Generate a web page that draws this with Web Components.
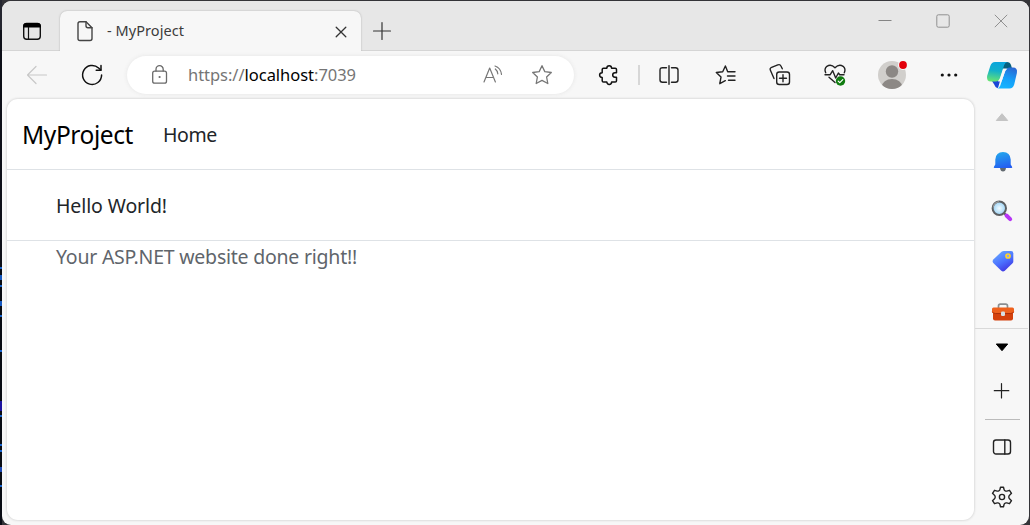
<!DOCTYPE html>
<html lang="en"><head><meta charset="utf-8"><title>- MyProject</title>
<style>
html,body{margin:0;height:100%;overflow:hidden}
body{background:#15171f;font-family:"Noto Sans","Open Sans",sans-serif}
</style></head><body>
<browser-window></browser-window>
<script>
const define=(name,html,extra)=>{
  const t=document.createElement('template');t.innerHTML=html;
  customElements.define(name,class extends HTMLElement{
    connectedCallback(){
      if(this.shadowRoot)return;
      this.attachShadow({mode:'open'}).appendChild(t.content.cloneNode(true));
      if(extra)extra(this);
    }
  });
};

/* name: [width, height, markup] */
const S='fill="none" stroke-linecap="round" stroke-linejoin="round"';
const icons={
workspace:[20,20,`<rect x="1.7" y="2.5" width="16.6" height="15.8" rx="3" fill="none" stroke="#111" stroke-width="1.4"/><path d="M1.2 6.500V4.900Q1.2 2 4.6 2h10.8q3.4 0 3.4 2.900v1.600z" fill="#000"/><path d="M6.5 6v12" stroke="#111" stroke-width="1.2"/>`],
page:[18,22,`<g ${S} stroke="#444" stroke-width="1.4"><path d="M4 1.7h6l6 6v10.8q0 2-2 2H4q-2 0-2-2V3.7q0-2 2-2z"/><path d="M10 1.8v4q0 2 2 2h4"/></g>`],
close:[12,12,`<path d="M1.200 1.200l9.600 9.600M10.800 1.200l-9.600 9.600" ${S} stroke="#333" stroke-width="1.3"/>`],
plus:[18,18,`<path d="M9 .5v17M.5 9h17" ${S} stroke="#333" stroke-width="1.2"/>`],
min:[14,14,`<path d="M.5 6.500h13" stroke="#858585"/>`],
max:[14,14,`<rect x=".8" y=".8" width="12.400" height="12.400" rx="1.5" fill="none" stroke="#909090"/>`],
winclose:[14,14,`<path d="M.8.8l12.4 12.4M13.2.8L.8 13.2" fill="none" stroke="#909090"/>`],
back:[22,20,`<path d="M20.5 10H1.5M10 1.5L1.5 10l8.5 8.5" ${S} stroke="#c8c8c8" stroke-width="1.2"/>`],
refresh:[22,22,`<g ${S} stroke="#111" stroke-width="1.5"><path d="M20.6 11a9.5 9.5 0 1 1-3-7l2.2 2"/><path d="M20 1.6V6.300h-4.8"/></g>`],
lock:[18,20,`<g ${S} stroke="#6a6a6a" stroke-width="1.3"><rect x="1.700" y="6.200" width="13.800" height="12" rx="2"/><path d="M5 6V4.300a3.600 3.600 0 0 1 7.200 0V6"/></g><circle cx="8.600" cy="12" r="1.100" fill="#6a6a6a"/>`],
read:[20,20,`<g ${S} stroke="#777" stroke-width="1.200"><path d="M1 17L6.700 3 12.400 17M3 12.500h7.500"/><path d="M12.300 4q2.300 1.800 2.500 4.800M12 1q5.700 1.800 6.500 8.400"/></g>`],
star:[22,22,`<path d="M11 1.700l2.800 5.900 6.500.9-4.700 4.500 1.200 6.500-5.800-3.100-5.800 3.100 1.200-6.500L1.700 8.500l6.500-.9z" ${S} stroke="#777" stroke-width="1.300"/>`],
puzzle:[20,20,`<path d="M4.500 3.200h3.300Q7.900.700 10.200.700t2.400 2.500h3.600q1.300 0 1.300 1.300v3.300h-1.600q-2.200.2-2.200 2.200t2.200 2.200h1.600v3.500q0 1.300-1.300 1.300h-3.600q0 2.400-2.300 2.400T7.800 17H4.500q-1.300 0-1.300-1.300v-3.300Q.6 12.300.6 10t2.600-2.300V4.500q0-1.300 1.300-1.300z" ${S} stroke="#111" stroke-width="1.500"/>`],
sep:[2,20,`<path d="M1 0v20" stroke="#ccc" stroke-width="1.500"/>`],
split:[20,20,`<g fill="none" stroke="#222" stroke-width="1.400" stroke-linecap="round"><path d="M7.500 2.700H3.500q-2.500 0-2.500 2.500v9.600q0 2.500 2.500 2.500h4M12.500 2.700h4q2.500 0 2.500 2.500v9.600q0 2.500-2.500 2.500h-4M10 .7v18.600"/></g>`],
fav:[22,20,`<path d="M12.700 6.800L10.400 1 7.700 6.700l-6.400.8 4.700 4.600-1.200 6.600 5.500-3M12.700 6.800H20M12.500 11h7.500M13.500 15.300H20" ${S} stroke="#222" stroke-width="1.400"/>`],
collections:[22,22,`<g ${S} stroke="#222" stroke-width="1.400"><rect x="7.700" y="8" width="12.800" height="12.500" rx="2.500"/><path d="M14 10.800v7M10.500 14.300h7M5 14.500L1.400 6.300q-.9-2 1.200-2.900L8.800.9q2.200-.9 3 .9l1.500 3"/></g>`],
heart:[22,22,`<g ${S} stroke="#222" stroke-width="1.400"><path d="M1.700 8.800Q-.1 4.800 2.900 2.300 7-.3 11 3.700q4-4 8.100-1.400 3 2.500 1.200 6.500M1 10.700h5.200l2.500-4 3 7.300 2.700-5 1.300 1.700H20M5 13.200l6 5.300"/></g><circle cx="16.500" cy="17" r="4.700" fill="#107c10"/><path d="M14.200 17.100l1.600 1.600 3-3.100" ${S} stroke="#fff" stroke-width="1.200"/>`],
avatar:[30,30,`<clipPath id="c"><circle cx="15" cy="15" r="14"/></clipPath><circle cx="15" cy="15" r="14" fill="#d1cfcc"/><g clip-path="url(#c)" fill="#8c8885"><circle cx="15" cy="11.500" r="6.200"/><ellipse cx="15" cy="27" rx="10.200" ry="8"/></g><circle cx="26" cy="5" r="5" fill="#f7f7f7"/><circle cx="26" cy="5" r="3.900" fill="#e3000b"/>`],
dots:[18,6,`<g fill="#111"><circle cx="2.300" cy="3" r="1.600"/><circle cx="9" cy="3" r="1.600"/><circle cx="15.700" cy="3" r="1.600"/></g>`],
copilot:[32,30,`<defs><linearGradient id="a" x1=".5" y1="0" x2=".35" y2="1"><stop stop-color="#0aa5dc"/><stop offset=".45" stop-color="#12b0cb"/><stop offset="1" stop-color="#67e472"/></linearGradient><linearGradient id="b" x1=".8" y1="0" x2=".4" y2="1"><stop stop-color="#2b66d2"/><stop offset=".55" stop-color="#159ff8"/><stop offset="1" stop-color="#16b4ff"/></linearGradient></defs><path d="M17 2h4q3 0 4 3l1 3.500h-9z" fill="#07607f"/><path d="M6 21h8l-2 7q-2.500 0-3.500-3z" fill="#1b47d8"/><path d="M9 2h12.500q-2.500.4-3.300 3L14 18q-1.200 3.500-4.300 3.500H5Q.2 21.500 1.100 16L4.300 6Q5.600 2 9 2z" fill="url(#a)"/><path d="M23.500 28.500H11q2.500-.5 3.300-3L19 11.500Q20.500 7.500 23.500 7.500H27q4.800 0 3.900 5.500l-2.700 11.500q-1.200 4-4.700 4z" fill="url(#b)"/><path d="M17.300 9h4q-1.600.7-2.300 2.700L15.500 21.500h-3.800q1.700-.7 2.400-2.800z" fill="#f7f7f7"/>`],
up:[14,10,`<path d="M7 1.700L12.700 8.500H1.300z" fill="#c4c4c4" stroke="#c4c4c4" stroke-linejoin="round"/>`],
bell:[20,22,`<defs><linearGradient id="d" x1=".3" y1="0" x2=".6" y2="1"><stop stop-color="#24a7ed"/><stop offset="1" stop-color="#245df0"/></linearGradient></defs><path d="M7 17h6q-.5 3.500-3 3.500T7 17z" fill="#626970"/><path d="M10 1q7.200 0 7.700 7.500v5l1.500 2.500q.3 1-.8 1H1.600q-1.100 0-.8-1l1.500-2.500v-5Q2.800 1 10 1z" fill="url(#d)"/>`],
search:[22,22,`<defs><radialGradient id="e"><stop stop-color="#f2fbff"/><stop offset="1" stop-color="#9ad2f5"/></radialGradient></defs><path d="M12 12l3 3" stroke="#555" stroke-width="2"/><path d="M15.500 15.500l3.700 3.600" stroke="#b735f5" stroke-width="4" stroke-linecap="round"/><circle cx="8.300" cy="8.300" r="6.700" fill="url(#e)" stroke="#5d6063" stroke-width="2"/><path d="M2.200 7.500Q3 2.500 8 1.600" fill="none" stroke="#999" stroke-width="1.200"/>`],
tag:[22,22,`<defs><linearGradient id="f" x1=".2" y1=".1" x2=".7" y2="1"><stop stop-color="#65a2ff"/><stop offset=".5" stop-color="#4b72ff"/><stop offset="1" stop-color="#3f32df"/></linearGradient></defs><path d="M12 1h7q2.300 0 2.300 2.300v8.200q0 1-.8 1.800l-7.700 7.400q-1.800 1.500-3.500 0L1.300 13q-1.500-1.700 0-3.500L9.500 1.800Q10.500 1 12 1z" fill="url(#f)"/><circle cx="16" cy="6" r="2" fill="#879cff" stroke="#ffd42b" stroke-width="1.700"/>`],
toolbox:[24,20,`<path d="M7.500 6V4q0-1.800 1.800-1.800h5.400q1.800 0 1.800 1.800v2" fill="none" stroke="#8a8e91" stroke-width="1.700"/><path d="M2 9h20v7.500q0 2-2 2H4q-2 0-2-2z" fill="#d4410c"/><path d="M2.500 5.500h19Q23 5.500 23 7v2.500q0 2-3 2H4q-3 0-3-2V7q0-1.500 1.500-1.500z" fill="#ee611d"/><path d="M1.400 9.800q.5 1.700 3 1.700h15.200q2.500 0 3-1.700" fill="none" stroke="#ad300a"/><rect x="10" y="9.500" width="4" height="4.500" rx="1.200" fill="#d7dfe2"/>`],
down:[14,10,`<path d="M7 8.700L12.700 2H1.300z" fill="#000" stroke="#000" stroke-linejoin="round"/>`],
add:[16,16,`<path d="M7.500 .5v14.500M.3 7.700h14.500" ${S} stroke="#222" stroke-width="1.200"/>`],
panel:[20,18,`<g ${S} stroke="#222" stroke-width="1.400"><rect x="1.500" y="2" width="17" height="14" rx="2.500"/><path d="M12.800 2v14"/></g>`],
gear:[22,22,`<g ${S} stroke="#222" stroke-width="1.400"><circle cx="11" cy="11" r="2.600"/><path d="M9.500 1.300h3l.6 2.300q.2.800 1.100 1.200.9.500 1.600.3l2.700-.8 2 3-2 1.900q-.7.600-.7 1.800t.7 1.800l2 1.900-2 3-2.700-.8q-.7-.2-1.600.3-.9.400-1.100 1.200l-.6 2.300h-3l-.6-2.300q-.2-.8-1.100-1.200-.9-.5-1.600-.3l-2.700.8-2-3 2-1.900q.7-.6.700-1.800t-.7-1.800l-2-1.900 2-3 2.700.8q.7.2 1.600-.3.9-.4 1.100-1.200z"/></g>`]
};
define('ui-icon','<style>:host{display:block;flex:none;line-height:0}svg{display:block;overflow:visible}</style><div></div>',el=>{
  const [w,h,m]=icons[el.getAttribute('name')];
  el.shadowRoot.querySelector('div').innerHTML=`<svg width="${w}" height="${h}" viewBox="0 0 ${w} ${h}">${m}</svg>`;
});

/* Single line label tracked to an even advance width */
define('ui-label','<style>:host{display:block;flex:none;white-space:pre}span{display:inline-block}</style><span><slot></slot></span>',el=>{
  const want=+el.getAttribute('width'),s=el.shadowRoot.querySelector('span');
  s.style.letterSpacing=(want-s.getBoundingClientRect().width)/el.textContent.length+'px';
});

define('browser-tab',`<style>
:host{display:flex;align-items:center;box-sizing:border-box;width:301px;height:40px;background:#f7f7f7;border-radius:7px 7px 0 0;box-shadow:0 0 2px #aaa;padding:0 14px 0 16px;color:#3c3c3c;font-size:14.5px;clip-path:inset(-3px -3px 0 -3px)}
ui-label{margin:-2px 0 0 13px;line-height:20px}.x{margin:1px 0 0 auto}
</style><ui-icon name="page"></ui-icon><ui-label width="79"><slot></slot></ui-label><ui-icon class="x" name="close"></ui-icon>`,el=>{
  const s=el.shadowRoot.querySelector('ui-label').shadowRoot.querySelector('span');
  s.style.letterSpacing='0';
  s.style.letterSpacing=(77-s.getBoundingClientRect().width)/el.textContent.length+'px';
});

define('title-bar',`<style>
:host{display:flex;box-sizing:border-box;height:50px;background:#e7e7e7;border-bottom:1px solid #d5d5d5;padding-left:20px}
.ws{margin-top:20px}browser-tab{margin:10px 0 0 18px}.new{margin:21px 0 0 12px}
.win{display:flex;gap:44px;margin:13px 21px 0 auto}
</style><ui-icon class="ws" name="workspace"></ui-icon><browser-tab>- MyProject</browser-tab><ui-icon class="new" name="plus"></ui-icon>
<div class="win"><ui-icon name="min"></ui-icon><ui-icon name="max"></ui-icon><ui-icon name="winclose"></ui-icon></div>`);

define('address-bar',`<style>
:host{display:flex;align-items:center;box-sizing:border-box;height:38px;background:#fff;border-radius:19px;box-shadow:0 0 4px #e4e4e4;padding:0 21px 0 24px;font-size:16.5px;color:#757575}
ui-label{margin-left:19px;line-height:24px}b{font-weight:400;color:#000}
.r{margin-left:auto}.s{margin-left:28px}
</style><ui-icon name="lock"></ui-icon><ui-label width="168">https://<b>localhost</b>:7039</ui-label><ui-icon class="r" name="read"></ui-icon><ui-icon class="s" name="star"></ui-icon>`);

define('tool-bar',`<style>
:host{display:grid;grid-template-columns:54px 56px 7px 447px 13px 44px 16px 44px 70px 38px 72px 42px 72px 34px;box-sizing:border-box;height:47px;padding:0 0 0 8px;align-items:center;justify-items:center}
address-bar{width:447px}
</style><ui-icon name="back"></ui-icon><ui-icon name="refresh"></ui-icon><i></i><address-bar></address-bar><i></i><ui-icon name="puzzle"></ui-icon><ui-icon name="sep"></ui-icon><ui-icon name="split"></ui-icon><ui-icon name="fav"></ui-icon><ui-icon name="collections"></ui-icon><ui-icon name="heart"></ui-icon><ui-icon name="avatar"></ui-icon><ui-icon name="dots"></ui-icon><ui-icon name="copilot"></ui-icon>`);

define('web-page',`<style>
:host{display:block;box-sizing:border-box;width:967px;height:421px;background:#fff;border-radius:11px;box-shadow:0 0 2px 1px #dedede;color:#212529;font-size:19.5px;line-height:30px;overflow:hidden}
nav{display:flex;box-sizing:border-box;height:71px;border-bottom:1px solid #dee2e6;padding:21px 0 0 15px}
.brand{font-size:24.5px;color:#000}.home{margin-left:30px}
main{box-sizing:border-box;height:71px;padding:21px 0 0 49px;border-bottom:1px solid #dee2e6}
footer{padding:1px 0 0 49px;color:#5f656b}
</style><nav><ui-label class="brand" width="111">MyProject</ui-label><ui-label class="home" width="54">Home</ui-label></nav>
<main><ui-label width="111">Hello World!</ui-label></main><footer><ui-label width="301">Your ASP.NET website done right!!</ui-label></footer>`);

define('side-bar',`<style>
:host{display:grid;width:53px;grid-template-rows:38px 52px 46px 54px 40px 1px 36px 52px 4px 52px 48px;align-items:center;justify-items:center}
.o{margin-left:2px}.t{padding-top:8px}.line{width:53px;height:1px;background:#d9d9d9}.short{width:35px;height:1px;margin-left:1px;background:#bbb}
</style><ui-icon name="up"></ui-icon><ui-icon class="o" name="bell"></ui-icon><ui-icon name="search"></ui-icon><ui-icon class="o" name="tag"></ui-icon><ui-icon class="o t" name="toolbox"></ui-icon><div class="line"></div><ui-icon name="down"></ui-icon><ui-icon name="add"></ui-icon><div class="short"></div><ui-icon name="panel"></ui-icon><ui-icon name="gear"></ui-icon>`);

define('browser-window',`<style>
:host{display:block;box-sizing:border-box;height:525px;padding:1px 1px 0 2px;background:linear-gradient(90deg,transparent 2px,#343438 2px),linear-gradient(#252730 0 30px,#0d0f18 30px 267px,#1763ce 267px 269px,#080b13 269px 275px,#1558c0 275px 280px,#080b13 280px 285px,#1763ce 285px 287px,#080b13 287px 301px,#1558c0 301px 306px,#080b13 306px 315px,#1763ce 315px 317px,#080b13 317px 350px,#1763ce 350px 352px,#080b13 352px 401px,#1c12a0 401px 411px,#080b13 411px 415px,#1763ce 415px 417px,#080b13 417px 444px,#1763ce 444px 446px,#080b13 446px 450px,#1763ce 450px 452px,#080b13 452px 467px,#1b48b3 467px 472px,#080b13 472px 485px,#1763ce 485px 487px,#080b13 487px)}
.w{height:524px;background:#f7f7f7;border-radius:9px;overflow:hidden}
.body{display:flex}web-page{margin:1px 1px 0 5px}
</style><div class="w"><title-bar></title-bar><tool-bar></tool-bar><div class="body"><web-page></web-page><side-bar></side-bar></div></div>`);
</script></body></html>
